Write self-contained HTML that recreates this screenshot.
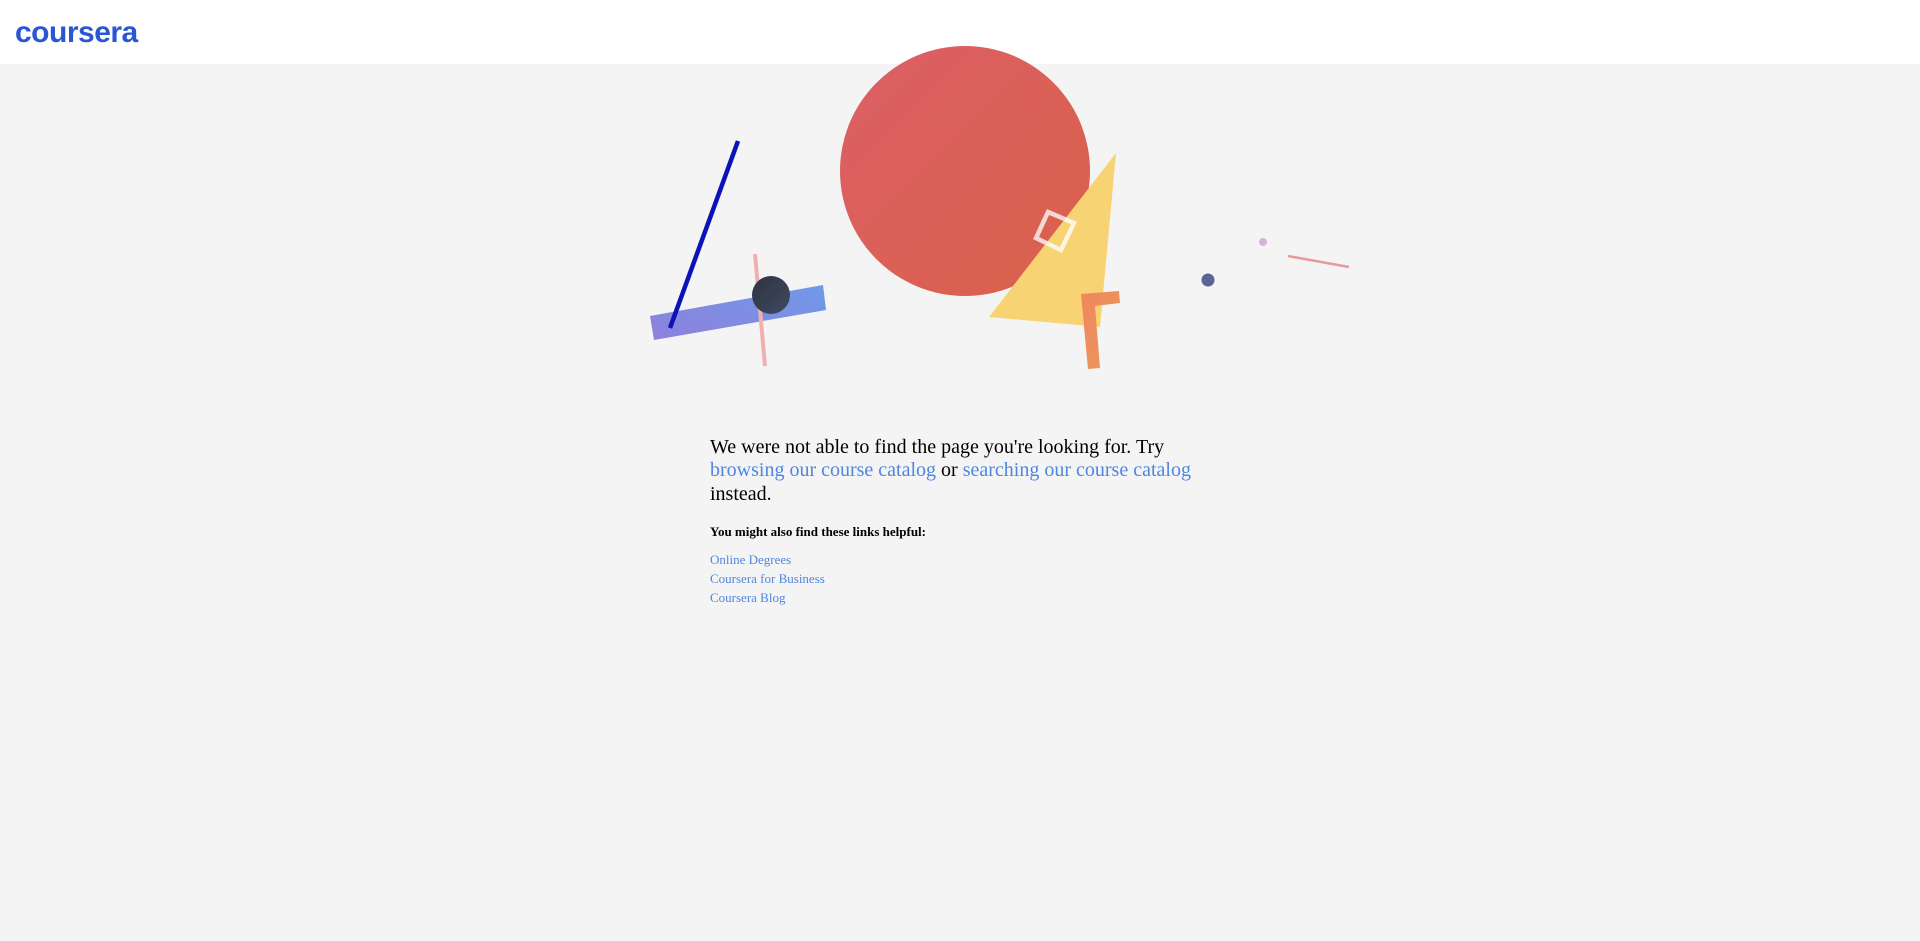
<!DOCTYPE html>
<html><head><meta charset="utf-8"><style>
html,body{margin:0;padding:0;}
body{width:1920px;height:941px;background:#f4f4f4;position:relative;overflow:hidden;font-family:"Liberation Serif",serif;}
.hdr{position:absolute;left:0;top:0;width:1920px;height:64px;background:#fff;}
.logo{position:absolute;left:15px;top:13px;font-family:"Liberation Sans",sans-serif;font-weight:bold;font-size:30px;letter-spacing:-0.5px;color:#2a56d4;line-height:40px;}
svg{position:absolute;left:0;top:0;}
.txt{position:absolute;left:710px;top:436px;width:505px;font-size:20px;line-height:23.3px;color:#000;}
a{color:#4f86df;text-decoration:none;}
.h{position:absolute;left:710px;top:524px;font-size:13px;font-weight:bold;}
.links{position:absolute;left:710px;top:550px;font-size:13px;line-height:19px;}
</style></head><body>
<div class="hdr"><div class="logo">coursera</div></div>
<svg width="1920" height="941" viewBox="0 0 1920 941">
<defs>
<linearGradient id="gc" x1="0" y1="0" x2="1" y2="1"><stop offset="0" stop-color="#dd5f66"/><stop offset="1" stop-color="#d9604a"/></linearGradient>
<linearGradient id="gb" x1="0" y1="1" x2="1" y2="0"><stop offset="0" stop-color="#8f80dc"/><stop offset="1" stop-color="#6e9ae8"/></linearGradient>
<linearGradient id="gd" x1="0" y1="0" x2="1" y2="1"><stop offset="0" stop-color="#2e3340"/><stop offset="1" stop-color="#3e4a60"/></linearGradient>
<linearGradient id="go" x1="0" y1="0" x2="1" y2="1"><stop offset="0" stop-color="#ef8660"/><stop offset="1" stop-color="#eb9a58"/></linearGradient>
</defs>
<circle cx="965" cy="171" r="125" fill="url(#gc)"/>
<polygon points="650,316 823,285 826,310 654,340" fill="url(#gb)"/>
<line x1="738" y1="141" x2="670" y2="328" stroke="#0a12b8" stroke-width="4.5"/>
<line x1="755" y1="254" x2="765" y2="366" stroke="#f0b0b0" stroke-width="4"/>
<circle cx="771" cy="295" r="19" fill="url(#gd)"/>
<polygon points="1116,153 989,317 1100,327" fill="#f7d374"/>
<polygon points="1048,212 1074,223 1061,250 1036,238" fill="none" stroke="#fff" stroke-opacity="0.75" stroke-width="4.5"/>
<polygon points="1081,294 1119,291 1120,303 1095,306 1100,368 1088,369" fill="url(#go)"/>
<circle cx="1263" cy="242" r="4" fill="#d3b6d6"/>
<circle cx="1208" cy="280" r="6.5" fill="#586599"/>
<line x1="1288" y1="256" x2="1349" y2="267" stroke="#e89a9a" stroke-width="2.5"/>
</svg>
<div class="txt">We were not able to find the page you're looking for. Try <a>browsing our course catalog</a> or <a>searching our course catalog</a> instead.</div>
<div class="h">You might also find these links helpful:</div>
<div class="links"><a>Online Degrees</a><br><a>Coursera for Business</a><br><a>Coursera Blog</a></div>
</body></html>
